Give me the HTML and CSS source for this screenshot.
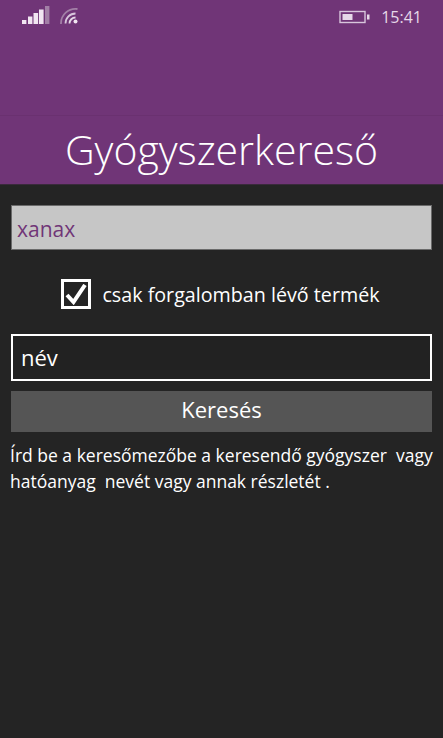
FILE: index.html
```html
<!DOCTYPE html>
<html lang="hu">
<head>
<meta charset="utf-8">
<title>Gyógyszerkereső</title>
<link rel="stylesheet" href="styles.css">
</head>
<body>
<header class="header">
  <div class="status">
    <svg class="signal" width="28" height="20" viewBox="0 0 28 20">
      <rect x="0" y="14" width="4.4" height="4" fill="#f1e6f1"/>
      <rect x="6" y="10.500" width="4.400" height="7.500" fill="#f1e6f1"/>
      <rect x="11.500" y="7" width="4.600" height="11" fill="#f1e6f1"/>
      <rect x="17" y="3.500" width="4.600" height="14.500" fill="#f1e6f1"/>
      <rect x="23" y="0" width="4.400" height="18" fill="#a27fa6"/>
    </svg>
    <svg class="wifi" width="20" height="20" viewBox="0 0 20 20" fill="none">
      <circle cx="15.500" cy="15.500" r="2" fill="#f1e6f1"/>
      <path d="M9.500 17.500a6 6 0 0 1 6-6" stroke="#e6d8e8" stroke-width="1.800"/>
      <path d="M5.500 17.500a10 10 0 0 1 10-10" stroke="#d8c6dc" stroke-width="1.800"/>
      <path d="M1 18a14.500 14.500 0 0 1 16.500-15" stroke="#a27fa6" stroke-width="1.800"/>
    </svg>
    <svg class="battery" width="31" height="14" viewBox="0 0 31 14" fill="none">
      <rect x="1" y="1.500" width="25" height="11" stroke="#d8c6dc" stroke-width="1.400"/>
      <rect x="3.500" y="4" width="10" height="6" fill="#e6d8e8"/>
      <rect x="28" y="4.500" width="2.500" height="5" fill="#e6d8e8"/>
    </svg>
    <span class="clock">15:41</span>
  </div>
  <h1 class="title">Gyógyszerkereső</h1>
</header>
<main class="content">
  <div class="search-box">xanax</div>
  <div class="check-row">
    <span class="checkbox">
      <svg width="22" height="21" viewBox="0 0 22 21" fill="none"><path d="M2 11l6.500 7L20 1" stroke="#fff" stroke-width="4"/></svg>
    </span>
    <span class="check-label">csak forgalomban lévő termék</span>
  </div>
  <div class="select-box">név</div>
  <div class="button">Keresés</div>
  <p class="help">Írd be a keresőmezőbe a keresendő gyógyszer&nbsp; vagy hatóanyag&nbsp; nevét vagy annak részletét .</p>
</main>
</body>
</html>
```

FILE: styles.css
```css
* { box-sizing: border-box; }
html, body { margin: 0; height: 100%; }
body {
  background: #242424;
  color: #fff;
  font-family: "Open Sans", "Noto Sans", sans-serif;
  overflow: hidden;
}
.header {
  height: 185px;
  background: #703577;
  border-bottom: 1px solid #3a2a3c;
  display: flex;
  flex-direction: column;
}
.status {
  height: 116px;
  flex: none;
  border-bottom: 1px solid #6a3170;
  display: flex;
  align-items: flex-start;
  padding: 6px 21px 0 22px;
}
.wifi { margin-left: 10px; margin-top: 0; }
.battery { margin-left: auto; margin-top: 4px; }
.clock {
  margin-left: 11px;
  font-size: 16px;
  line-height: 22px;
  color: #e6d8e8;
}
.title {
  margin: 6px 0 0;
  font-size: 41px;
  font-weight: 300;
  line-height: 54px;
  text-align: center;
}
.content {
  padding: 20px 11px 0;
  display: flex;
  flex-direction: column;
}
.search-box {
  height: 45px;
  background: #c6c6c6;
  border: 1px solid #6a6a6a;
  color: #703577;
  font-size: 21px;
  line-height: 46px;
  padding-left: 5px;
}
.check-row {
  margin-top: 29px;
  display: flex;
  align-items: center;
  justify-content: center;
  gap: 11px;
  height: 30px;
  padding-right: 2px;
}
.checkbox {
  width: 30px;
  height: 30px;
  border: 3px solid #fff;
  display: flex;
  align-items: center;
  justify-content: center;
}
.check-label {
  font-size: 19.700px;
  line-height: 31px;
}
.select-box {
  margin-top: 25px;
  height: 47px;
  border: 2px solid #fff;
  background: #222;
  font-size: 22px;
  line-height: 42px;
  padding-left: 8px;
}
.button {
  margin-top: 10px;
  height: 41px;
  background: #555;
  font-size: 22px;
  line-height: 36px;
  text-align: center;
}
.help {
  margin: 10px -3px 0 -1px;
  font-size: 17.500px;
  line-height: 26px;
}
```
